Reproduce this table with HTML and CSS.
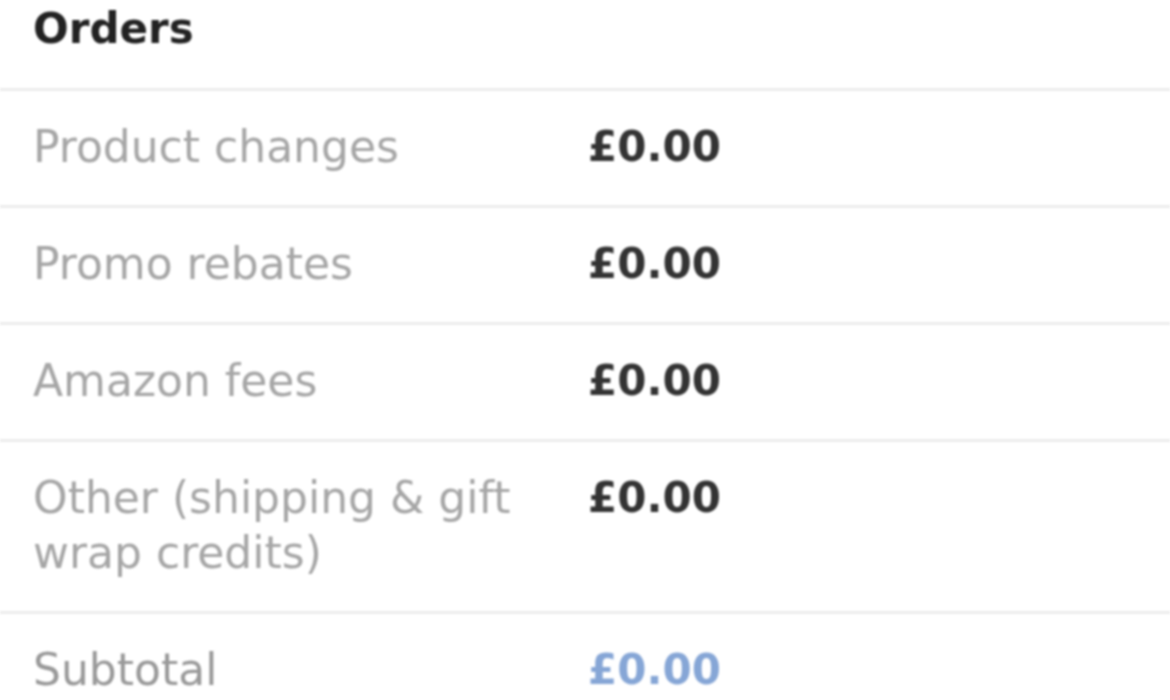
FILE: index.html
```html
<!DOCTYPE html>
<html lang="en">
<head>
    <meta charset="UTF-8">
    <meta name="viewport" content="width=device-width, initial-scale=1.0">
    <title>Orders</title>
    <link rel="stylesheet" href="styles.css">
</head>
<body>
    <div class="summary">
        <!-- SECTION TITLE -->
        <h2 class="summary-title">Orders</h2>

        <!-- LINE ITEMS -->
        <div class="summary-row">
            <span class="row-label">Product changes</span>
            <span class="row-value">£0.00</span>
        </div>
        <div class="summary-row">
            <span class="row-label">Promo rebates</span>
            <span class="row-value">£0.00</span>
        </div>
        <div class="summary-row">
            <span class="row-label">Amazon fees</span>
            <span class="row-value">£0.00</span>
        </div>
        <div class="summary-row">
            <span class="row-label">Other (shipping &amp; gift wrap credits)</span>
            <span class="row-value">£0.00</span>
        </div>
        <div class="summary-row subtotal">
            <span class="row-label">Subtotal</span>
            <span class="row-value">£0.00</span>
        </div>
    </div>
</body>
</html>
```

FILE: styles.css
```css
body {
    font-family: 'DejaVu Sans', 'Liberation Sans', sans-serif;
    background-color: #fff;
    margin: 0;
    padding: 0;
    overflow: hidden;
}
.summary {
    width: 100%;
    filter: blur(1.1px);
}
.summary-title {
    margin: 0;
    height: 88px;
    box-sizing: border-box;
    padding: 0 33px;
    font-size: 42px;
    line-height: 57px;
    font-weight: bold;
    color: #222;
}
.summary-row {
    display: grid;
    grid-template-columns: 520px auto;
    column-gap: 35px;
    padding: 28px 33px 31px;
    border-top: 3px solid #ececec;
    font-size: 44px;
    line-height: 55px;
}
.row-label {
    color: #a6a6a6;
}
.row-value {
    color: #333;
    font-weight: bold;
    font-size: 42px;
}
.subtotal .row-label {
    color: #999;
}
.subtotal .row-value {
    color: #86a6d6;
}
```
